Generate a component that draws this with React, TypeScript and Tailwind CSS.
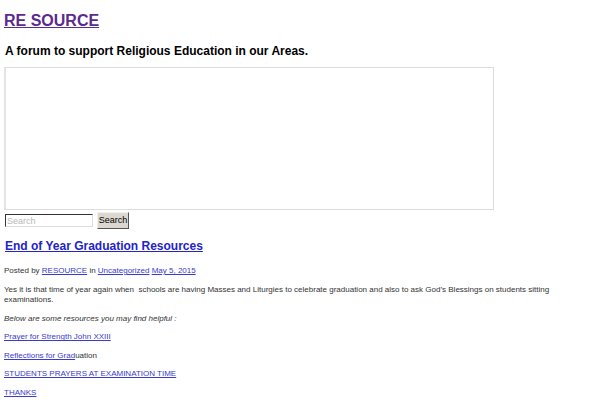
import React from 'react';

const App: React.FC = () => {
  return (
    <div className="w-[600px] h-[400px] overflow-hidden bg-white px-[4px] font-['Liberation_Sans',Arial,sans-serif] text-[#333]">
      {/* Site header */}
      <header className="pt-[11px]">
        <h1 className="text-[16px] leading-[20px] h-[20px] font-bold">
          <a href="#" className="text-[#5b2a8c] underline">RE SOURCE</a>
        </h1>
        <p className="mt-[12px] ml-[1px] text-[12px] leading-[16px] font-bold text-black">
          A forum to support Religious Education in our Areas.
        </p>
      </header>

      {/* Embedded frame */}
      <div className="mt-[8px] w-[490px] h-[143px] border border-[#dcdcdc] border-l-2 border-l-[#e4e4e4] bg-white"></div>

      {/* Search */}
      <form className="mt-[2px] flex items-center gap-[4px] h-[17px]" onSubmit={(e) => e.preventDefault()}>
        <input
          type="text"
          placeholder="Search"
          className="ml-[1px] w-[88px] h-[13px] border border-t-[#333] border-l-[#333] border-r-[#ddd] border-b-[#ddd] bg-white px-[1px] text-[9px] leading-[11px] placeholder:text-[#b8b8b8] outline-none"
        />
        <button
          type="button"
          className="w-[32px] h-[17px] bg-[#dcd8d0] border border-t-[#f2f0ec] border-l-[#f2f0ec] border-r-[#555] border-b-[#555] text-[9px] leading-[15px] text-black"
        >
          Search
        </button>
      </form>

      {/* Post */}
      <article className="mt-[9px]">
        <h2 className="ml-[1px] text-[12px] leading-[16px] font-bold">
          <a href="#" className="text-[#2323c8] underline">End of Year Graduation Resources</a>
        </h2>
        <p className="mt-[12px] text-[8px] leading-[10px]">
          Posted by <a href="#" className="text-[#3a3ad0] underline">RESOURCE</a> in{' '}
          <a href="#" className="text-[#3a3ad0] underline">Uncategorized</a>{' '}
          <a href="#" className="text-[#3a3ad0] underline">May 5, 2015</a>
        </p>
        <div className="mt-[9px] text-[8px] leading-[10px] space-y-[8.6px]">
          <p>
            Yes it is that time of year again when &nbsp;schools are having Masses and Liturgies to celebrate graduation and also to ask God’s Blessings on students sitting examinations.
          </p>
          <p className="italic">Below are some resources you may find helpful :</p>
          <p><a href="#" className="text-[#3a3ad0] underline">Prayer for Strength John XXIII</a></p>
          <p><a href="#" className="text-[#3a3ad0] underline">Reflections for Grad</a>uation</p>
          <p><a href="#" className="text-[#3a3ad0] underline">STUDENTS PRAYERS AT EXAMINATION TIME</a></p>
          <p><a href="#" className="text-[#3a3ad0] underline">THANKS</a></p>
        </div>
      </article>
    </div>
  );
};

export default App;
